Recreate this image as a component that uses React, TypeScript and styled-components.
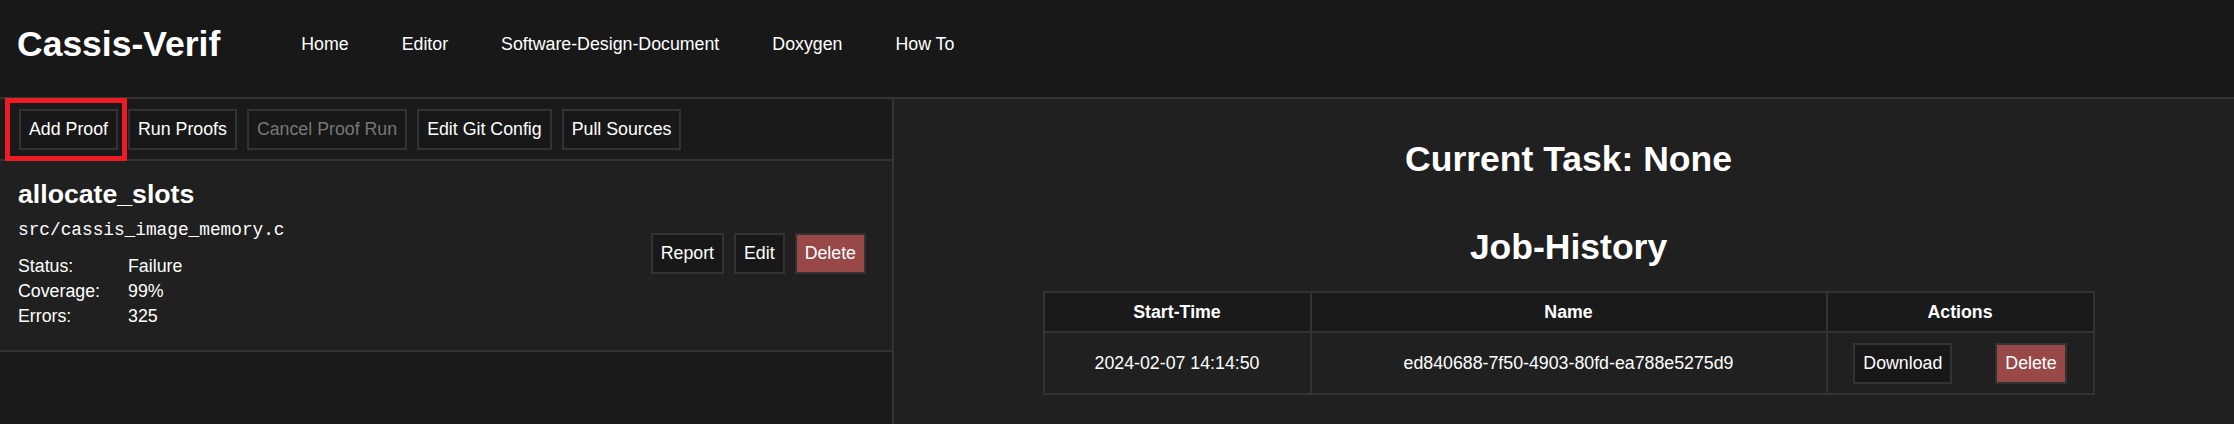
import React from "react"
import styled, { createGlobalStyle, css } from "styled-components"

const GlobalStyle = createGlobalStyle`
	html, body {
		margin: 0;
		padding: 0;
		background: #202020;
	}
	body {
		font-family: "Liberation Sans", Arial, sans-serif;
		color: #fff;
	}
`

const Page = styled.div`
	display: flex;
	flex-direction: column;
	height: 100vh;
	overflow: hidden;
`

const Header = styled.header`
	display: flex;
	align-items: center;
	box-sizing: border-box;
	height: 99px;
	padding: 0 0 8px 17px;
	background: #181818;
	border-bottom: 2px solid #333;
	flex-shrink: 0;
`

const Brand = styled.h1`
	margin: 0;
	font-size: 35.5px;
	line-height: 41px;
	font-weight: bold;
`

const Nav = styled.nav`
	display: flex;
	gap: 53px;
	margin-left: 81px;
	a {
		color: #fff;
		text-decoration: none;
		font-size: 17.77px;
		line-height: 20.4px;
		cursor: pointer;
	}
`

const Main = styled.main`
	display: flex;
	flex: 1;
	min-height: 0;
`

const ProofColumn = styled.section`
	width: 894px;
	box-sizing: border-box;
	flex-shrink: 0;
	background: #1a1a1a;
	border-right: 2px solid #333;
`

const Toolbar = styled.div`
	display: flex;
	align-items: center;
	gap: 10px;
	height: 62px;
	box-sizing: border-box;
	padding: 0 19px;
	background: #1a1a1a;
	border-bottom: 2px solid #333;
`

const Button = styled.button<{ $danger?: boolean }>`
	font-family: inherit;
	font-size: 17.77px;
	line-height: 21px;
	padding: 8px 8px;
	margin: 0;
	border: 2px solid #333;
	border-radius: 0;
	background: #181818;
	color: #fff;
	cursor: pointer;
	white-space: nowrap;
	${({ $danger }) => $danger && css`
		background: #994848;
	`}
	&:disabled {
		color: #777;
		cursor: default;
	}
`

const Highlight = styled.span`
	position: relative;
	display: inline-flex;
	&::after {
		content: '';
		position: absolute;
		left: -14px;
		right: -9px;
		top: -11px;
		bottom: -11px;
		border: 5px solid #ed1c24;
		pointer-events: none;
		z-index: 2;
	}
`

const ProofCard = styled.div`
	display: flex;
	align-items: center;
	justify-content: space-between;
	height: 191px;
	box-sizing: border-box;
	padding: 0 26px 4px 18px;
	background: #202020;
	border-bottom: 2px solid #333;
`

const ProofInfo = styled.div`
	display: flex;
	flex-direction: column;
`

const ProofName = styled.h2`
	margin: 0;
	font-size: 26.67px;
	line-height: 31px;
	font-weight: bold;
`

const ProofPath = styled.code`
	margin-top: 10px;
	font-family: "Liberation Mono", "Courier New", monospace;
	font-size: 17.77px;
	line-height: 20px;
`

const Stats = styled.dl`
	display: grid;
	grid-template-columns: 110px auto;
	margin: 14px 0 0;
	font-size: 17.77px;
	line-height: 25px;
	dt, dd {
		margin: 0;
	}
`

const CardActions = styled.div`
	display: flex;
	gap: 10px;
`

const StatusPanel = styled.section`
	flex: 1;
	display: flex;
	flex-direction: column;
	align-items: center;
	padding-left: 9px;
	background: #202020;
`

const PanelHeading = styled.h1<{ $gap: number }>`
	margin: ${({ $gap }) => $gap}px 0 0;
	font-size: 35.5px;
	line-height: 41px;
	font-weight: bold;
`

const JobTable = styled.table`
	margin-top: 23px;
	width: 1052px;
	table-layout: fixed;
	border-collapse: collapse;
	border: 2px solid #333;
	font-size: 17.77px;
	line-height: 20.4px;
	th, td {
		border: 2px solid #333;
		text-align: center;
		vertical-align: middle;
	}
	th {
		padding: 9px;
		background: #1a1a1a;
		font-weight: bold;
	}
	td {
		padding: 9.5px 9px;
		background: #202020;
	}
`

const RowActions = styled.div`
	display: flex;
	justify-content: center;
	gap: 43px;
`

const navLinks = ['Home', 'Editor', 'Software-Design-Document', 'Doxygen', 'How To']

const proof = {
	name: 'allocate_slots',
	file: 'src/cassis_image_memory.c',
	status: 'Failure',
	coverage: '99%',
	errors: 325,
}

const jobs = [
	{ start: '2024-02-07 14:14:50', name: 'ed840688-7f50-4903-80fd-ea788e5275d9' },
]

export default function App() {
	return (
		<Page>
			<GlobalStyle />
			<Header>
				<Brand>Cassis-Verif</Brand>
				<Nav>
					{navLinks.map(l => <a key={l}>{l}</a>)}
				</Nav>
			</Header>
			<Main>
				<ProofColumn>
					<Toolbar>
						<Highlight><Button>Add Proof</Button></Highlight>
						<Button>Run Proofs</Button>
						<Button disabled>Cancel Proof Run</Button>
						<Button>Edit Git Config</Button>
						<Button>Pull Sources</Button>
					</Toolbar>
					<ProofCard>
						<ProofInfo>
							<ProofName>{proof.name}</ProofName>
							<ProofPath>{proof.file}</ProofPath>
							<Stats>
								<dt>Status:</dt><dd>{proof.status}</dd>
								<dt>Coverage:</dt><dd>{proof.coverage}</dd>
								<dt>Errors:</dt><dd>{proof.errors}</dd>
							</Stats>
						</ProofInfo>
						<CardActions>
							<Button>Report</Button>
							<Button>Edit</Button>
							<Button $danger>Delete</Button>
						</CardActions>
					</ProofCard>
				</ProofColumn>
				<StatusPanel>
					<PanelHeading $gap={40}>Current Task: None</PanelHeading>
					<PanelHeading $gap={47}>Job-History</PanelHeading>
					<JobTable>
						<colgroup>
							<col style={{ width: 267 }} />
							<col style={{ width: 516 }} />
							<col style={{ width: 267 }} />
						</colgroup>
						<thead>
							<tr>
								<th>Start-Time</th>
								<th>Name</th>
								<th>Actions</th>
							</tr>
						</thead>
						<tbody>
							{jobs.map(j => (
								<tr key={j.name}>
									<td>{j.start}</td>
									<td>{j.name}</td>
									<td>
										<RowActions>
											<Button>Download</Button>
											<Button $danger>Delete</Button>
										</RowActions>
									</td>
								</tr>
							))}
						</tbody>
					</JobTable>
				</StatusPanel>
			</Main>
		</Page>
	)
}
